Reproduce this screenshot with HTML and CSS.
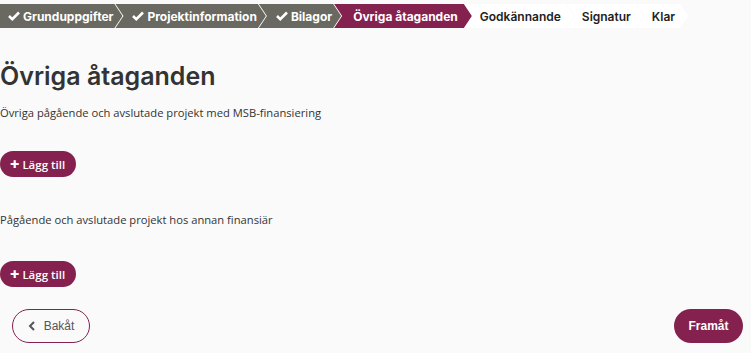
FILE: index.html
```html
<!doctype html>
<html lang="sv">
  <head>
    <meta charset="UTF-8" />
    <meta name="viewport" content="width=device-width, initial-scale=1.0" />
    <title>Övriga åtaganden</title>
    <link rel="stylesheet" href="styles.css">
  </head>
  <body>
    <nav class="steps">
      <div class="step done first">
        <svg class="check" width="12" height="10" viewBox="0 0 12 10"><path d="M1 5 L4.3 8.2 L11 1.5" fill="none" stroke="#fff" stroke-width="2.6"/></svg>
        Grunduppgifter
      </div>
      <div class="step done">
        <svg class="check" width="12" height="10" viewBox="0 0 12 10"><path d="M1 5 L4.3 8.2 L11 1.5" fill="none" stroke="#fff" stroke-width="2.6"/></svg>
        Projektinformation
      </div>
      <div class="step done">
        <svg class="check" width="12" height="10" viewBox="0 0 12 10"><path d="M1 5 L4.3 8.2 L11 1.5" fill="none" stroke="#fff" stroke-width="2.6"/></svg>
        Bilagor
      </div>
      <div class="step current">Övriga åtaganden</div>
      <div class="step">Godkännande</div>
      <div class="step">Signatur</div>
      <div class="step">Klar</div>
    </nav>

    <main class="content">
      <h1>Övriga åtaganden</h1>

      <section class="block">
        <p>Övriga pågående och avslutade projekt med MSB-finansiering</p>
        <button class="add-btn"><span class="plus">+</span>Lägg till</button>
      </section>

      <section class="block">
        <p>Pågående och avslutade projekt hos annan finansiär</p>
        <button class="add-btn"><span class="plus">+</span>Lägg till</button>
      </section>

      <div class="nav-buttons">
        <button class="back-btn">
          <svg width="8" height="10" viewBox="0 0 8 10"><path d="M6 1 L2 5 L6 9" fill="none" stroke="#555" stroke-width="2"/></svg>
          Bakåt
        </button>
        <button class="next-btn">Framåt</button>
      </div>
    </main>
  </body>
</html>
```

FILE: styles.css
```css
body {
  margin: 0;
  background-color: #fafafa;
  font-family: "Open Sans", Arial, sans-serif;
  color: #333;
}

.steps {
  display: flex;
  padding-top: 4px;
  font-family: Inter, "Noto Sans", sans-serif;
  font-size: 12px;
  font-weight: 600;
}

.step {
  height: 24px;
  display: flex;
  align-items: center;
  padding: 0 13px 0 15px;
  margin-right: -7px;
  background-color: #fff;
  color: #222;
  clip-path: polygon(0 0, calc(100% - 8px) 0, 100% 50%, calc(100% - 8px) 100%, 0 100%, 8px 50%);
}

.step.done {
  background-color: #6a6961;
  color: #fff;
  font-weight: 700;
  padding: 0 9px 0 17px;
}

.step.done.first {
  padding-left: 8px;
  clip-path: polygon(0 0, calc(100% - 8px) 0, 100% 50%, calc(100% - 8px) 100%, 0 100%);
}

.step.current {
  background-color: #85214f;
  color: #fff;
  font-weight: 700;
  padding: 0 14px 0 19px;
}

.check {
  margin-right: 3px;
}

.content {
  padding: 0 8px 0 0;
}

h1 {
  font-family: Inter, "Noto Sans", sans-serif;
  font-size: 25px;
  font-weight: 600;
  margin: 33px 0 14px;
  color: #333;
}

.block p {
  font-size: 11.2px;
  line-height: 16px;
  margin: 0 0 30px;
  color: #333;
}

.block {
  margin-bottom: 35px;
}

.block + .block p {
  margin-bottom: 33px;
}

.add-btn {
  background-color: #85214f;
  color: #fff;
  border: none;
  border-radius: 14px;
  height: 26px;
  padding: 0 11px 0 10px;
  font-family: "Open Sans", sans-serif;
  font-size: 11.5px;
  font-weight: 600;
  cursor: pointer;
  display: inline-flex;
  align-items: center;
}

.plus {
  font-size: 16px;
  font-weight: 800;
  margin-right: 3px;
  line-height: 1;
}

.nav-buttons {
  display: flex;
  justify-content: space-between;
  padding: 0 0 0 12px;
  margin-top: -13px;
}

.back-btn,
.next-btn {
  height: 34px;
  border-radius: 17px;
  font-family: "Liberation Sans", Arial, sans-serif;
  font-size: 12px;
  cursor: pointer;
}

.back-btn {
  width: 78px;
  background: transparent;
  border: 1px solid #85214f;
  color: #555;
  display: flex;
  align-items: center;
  justify-content: center;
  gap: 8px;
}

.next-btn {
  width: 69px;
  background-color: #85214f;
  border: none;
  color: #fff;
  font-weight: 700;
}
```
